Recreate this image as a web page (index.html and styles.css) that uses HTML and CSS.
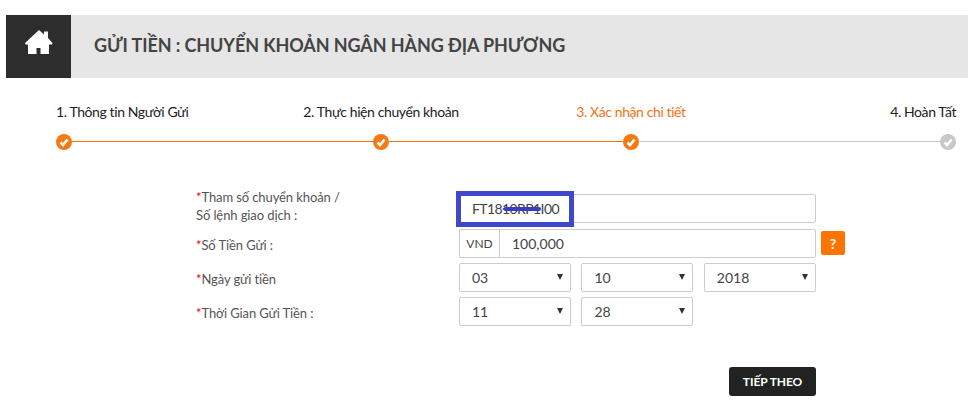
FILE: index.html
```html
<!DOCTYPE html>
<html lang="vi">
<head>
  <meta charset="UTF-8">
  <title>Gửi tiền</title>
  <link rel="stylesheet" href="styles.css">
</head>
<body>
  <div class="head">
    <a class="home" href="#">
      <svg width="28" height="24" viewBox="0 0 28 24"><path d="M14 0L19 4.500V1.500H23V8L27.500 13L27 14.500H24V24H15.500V18H11.500V24H3V14.500H.5L0 13Z" fill="#fff"/></svg>
    </a>
    <h1 class="title">GỬI TIỀN : CHUYỂN KHOẢN NGÂN HÀNG ĐỊA PHƯƠNG</h1>
  </div>

  <div class="step-labels">
    <div class="step-label">1. Thông tin Người Gửi</div>
    <div class="step-label">2. Thực hiện chuyển khoản</div>
    <div class="step-label active">3. Xác nhận chi tiết</div>
    <div class="step-label">4. Hoàn Tất</div>
  </div>
  <div class="track">
    <svg class="dot" width="16" height="16" viewBox="0 0 16 16"><circle cx="8" cy="8" r="8" fill="#f57a14"/><path d="M4.500 8.500l2.500 2.500 4.500-5.500" fill="none" stroke="#fff" stroke-width="2.600"/></svg>
    <div class="line long"></div>
    <svg class="dot" width="16" height="16" viewBox="0 0 16 16"><circle cx="8" cy="8" r="8" fill="#f57a14"/><path d="M4.500 8.500l2.500 2.500 4.500-5.500" fill="none" stroke="#fff" stroke-width="2.600"/></svg>
    <div class="line short"></div>
    <svg class="dot" width="16" height="16" viewBox="0 0 16 16"><circle cx="8" cy="8" r="8" fill="#f57a14"/><path d="M4.500 8.500l2.500 2.500 4.500-5.500" fill="none" stroke="#fff" stroke-width="2.600"/></svg>
    <div class="line long todo"></div>
    <svg class="dot" width="16" height="16" viewBox="0 0 16 16"><circle cx="8" cy="8" r="8" fill="#c8c8c8"/><path d="M4.500 8.500l2.500 2.500 4.500-5.500" fill="none" stroke="#fff" stroke-width="2.600"/></svg>
  </div>

  <form class="form">
    <div class="row first">
      <label class="label tall"><span class="req">*</span>Tham số chuyển khoản /<br>Số lệnh giao dịch :</label>
      <div class="control">
        <input class="input code" value="FT1810RP1I00">
        <div class="mark"></div>
        <div class="mark-arrow"></div>
      </div>
    </div>
    <div class="row">
      <label class="label"><span class="req">*</span>Số Tiền Gửi :</label>
      <div class="control money">
        <span class="unit">VND</span>
        <input class="input amount" value="100,000">
      </div>
      <button class="help" type="button">?</button>
    </div>
    <div class="row">
      <label class="label"><span class="req">*</span>Ngày gửi tiền</label>
      <div class="control selects">
        <div class="select"><select><option>03</option></select></div>
        <div class="select"><select><option>10</option></select></div>
        <div class="select"><select><option>2018</option></select></div>
      </div>
    </div>
    <div class="row">
      <label class="label"><span class="req">*</span>Thời Gian Gửi Tiền :</label>
      <div class="control selects">
        <div class="select"><select><option>11</option></select></div>
        <div class="select"><select><option>28</option></select></div>
      </div>
    </div>
    <div class="actions">
      <button class="next" type="button">TIẾP THEO</button>
    </div>
  </form>
</body>
</html>
```

FILE: styles.css
```css
body { margin:0; background:#fff; color:#555; font-family:Lato, "Liberation Sans", sans-serif; font-size:14px; }

.head { display:flex; height:63px; margin:15px 0 0 6px; background:#e6e6e6; }
.home { display:flex; align-items:center; justify-content:center; width:65px; padding-bottom:9px; box-sizing:border-box; background:#2e2d2d; }
.title { margin:0 0 3px 23px; align-self:center; font-size:18px; font-weight:bold; letter-spacing:-.1px; color:#444; }

.step-labels {
  display:grid; grid-template-columns:175px 200px 200px 175px; column-gap:50px;
  width:900px; margin:25px 0 0 56px; line-height:18px; letter-spacing:-.4px; color:#222;
}
.step-label:nth-child(2), .step-label:nth-child(3) { text-align:center; }
.step-label:last-child { text-align:right; }
.step-label.active { color:#f47216; }

.track { display:flex; align-items:center; width:900px; margin:13px 0 0 56px; }
.dot { flex:none; display:block; }
.line { height:1px; margin-bottom:1px; background:#f47216; }
.line.long { width:301px; }
.line.short { width:234px; }
.line.todo { background:#c8c8c8; }

.form { width:649px; margin:44px 0 0 196px; }
.row { display:flex; align-items:flex-start; height:29px; margin-bottom:5px; }
.row.first { margin-bottom:6px; }
.label { flex:none; width:263px; padding-top:7px; font-size:13px; line-height:18px; letter-spacing:-.1px; color:#555; }
.label.tall { padding-top:0; margin-top:-6px; }
.req { color:#e00; }

.control { position:relative; flex:none; width:357px; height:29px; }
.input {
  box-sizing:border-box; width:100%; height:29px; padding:0 12px;
  border:1px solid #ccc; border-radius:2px; background:#fff;
  font:14px Lato, "Liberation Sans", sans-serif; color:#444;
}
.code { letter-spacing:-.6px; }
.mark { position:absolute; left:-3px; top:-3px; width:108px; height:26px; border:5px solid #3f48cc; }
.mark-arrow { position:absolute; left:45px; top:13px; width:37px; height:4px; border-radius:2px; background:#3a3fc0; }
.mark-arrow::before {
  content:""; position:absolute; left:-2px; top:-1px; width:0; height:0;
  border-style:solid; border-width:3px 5px 3px 0; border-color:transparent #3a3fc0 transparent transparent;
}

.money { display:flex; }
.unit {
  box-sizing:border-box; flex:none; width:40px; height:29px; line-height:27px; text-align:center;
  border:1px solid #ccc; border-right:none; border-radius:2px 0 0 2px; font-size:12px; color:#444;
}
.amount { flex:1; border-radius:0 2px 2px 0; }

.help {
  width:24px; height:24px; margin:2px 0 0 5px; padding:0; border:none; border-radius:2px;
  background:#ff7300; color:#fff; font:bold 14px Lato, "Liberation Sans", sans-serif;
}

.selects { display:grid; grid-template-columns:repeat(3, 112px); column-gap:10.4px; }
.select { position:relative; }
.select select {
  box-sizing:border-box; width:100%; height:29px; padding:0 12px;
  border:1px solid #ccc; border-radius:2px; background:#fff; appearance:none;
  font:14px Lato, "Liberation Sans", sans-serif; color:#444;
}
.select::after {
  content:""; position:absolute; right:8px; top:11px; width:0; height:0;
  border-style:solid; border-width:6px 3.500px 0 3.500px; border-color:#333 transparent transparent transparent;
}

.actions { display:flex; justify-content:flex-end; padding:36px 29px 0 0; }
.next {
  width:87px; height:29px; padding:0; border:none; border-radius:3px;
  background:#222; color:#fff; font:bold 12px Lato, "Liberation Sans", sans-serif; letter-spacing:-.1px;
}
```
